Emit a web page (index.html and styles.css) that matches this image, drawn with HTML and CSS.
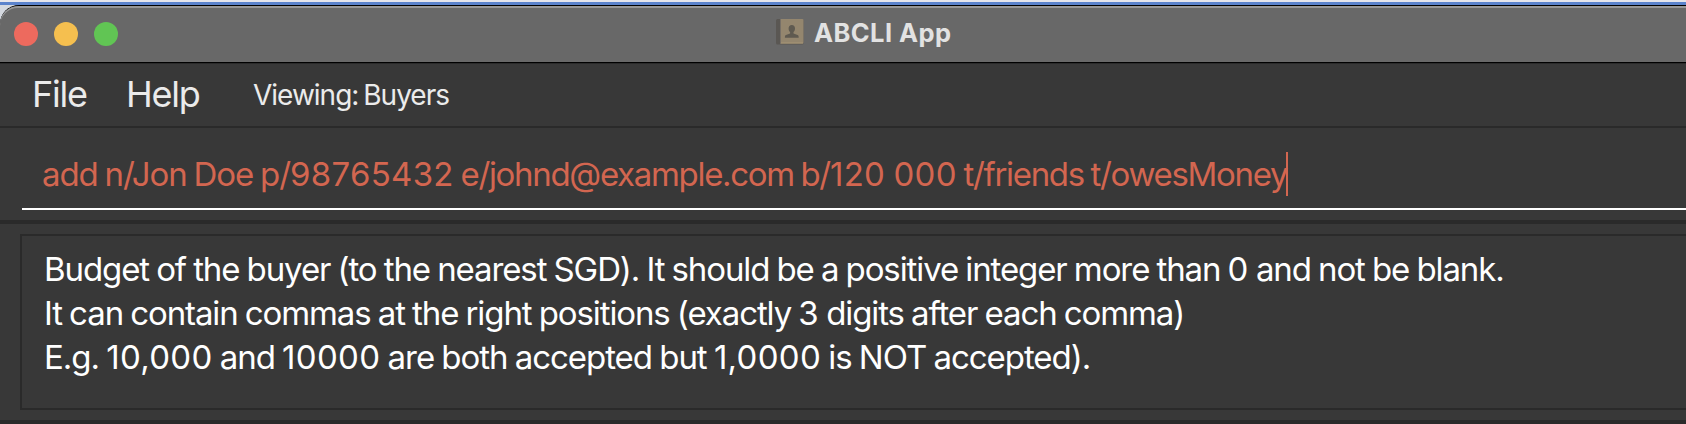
FILE: index.html
```
<!DOCTYPE html>
<html lang="en">
<head>
<meta charset="utf-8">
<title>ABCLI App</title>
<link rel="stylesheet" href="styles.css">
</head>
<body>
<div class="backdrop">
<main class="window">
  <header class="titlebar">
    <div class="lights"><i class="light close"></i><i class="light minimise"></i><i class="light maximise"></i></div>
    <div class="title">
      <svg class="book" width="28" height="28" viewBox="0 0 28 28">
        <rect x="0" y="1" width="27.5" height="25.5" rx="1.5" fill="#5a5753"/>
        <rect x="4" y="1" width="23.500" height="24.500" rx="1" fill="#94866e"/>
        <path d="M4 25H27" stroke="#a99777" stroke-width="1"/>
        <path d="M4.500 1V26" stroke="#777067" stroke-width="1"/>
        <path d="M15.8 7c-2 0-3.200 1.300-3.200 3.400 0 1.700.7 3 1.500 3.700v1.500l-4.100 1.500c-.8.4-1.100 1-1.100 2.700h13.800c0-1.700-.3-2.300-1.100-2.700l-4.100-1.500v-1.500c.8-.7 1.500-2 1.500-3.700C19 8.300 17.800 7 15.800 7z" fill="#5f5a50"/>
      </svg>
      <span class="name">ABCLI App</span>
    </div>
  </header>
  <nav class="menubar">
    <span class="menu file">File</span>
    <span class="menu help">Help</span>
    <span class="status">Viewing: Buyers</span>
  </nav>
  <section class="command">
    <div class="field"><span class="entry"><span class="lead">add n/Jon Doe p/</span><span class="num">98765432</span> e/johnd@example.com b/<span class="num">120 000</span> t/friends t/owesMoney</span><i class="caret"></i></div>
  </section>
  <section class="result">
    <div class="message">
      <p class="line first">Budget of the buyer (to the nearest SGD). It should be a positive integer more than <span class="num">0</span> and not be blank.</p>
      <p class="line second">It can contain commas at the right positions (exactly <span class="num">3</span> digits after each comma)</p>
      <p class="line third">E.g. <span class="num">10,000</span> and <span class="num">10000</span> are both accepted but <span class="num">1,0000</span> is NOT accepted).</p>
    </div>
  </section>
</main>
</div>
</body>
</html>
```
FILE: styles.css
```
* { box-sizing: border-box; }
body { margin: 0; overflow: hidden; font-family: Inter, "Liberation Sans", sans-serif; white-space: nowrap; }
p { margin: 0; }
.backdrop { height: 424px; padding-top: 5px; background: linear-gradient(#e6e6ec 0 2px, #5b83cc 2px 5px, #d5d9e0 5px); overflow: hidden; }
.window { width: 1710px; height: 419px; border-top: 1px solid #000; border-radius: 19px 0 0 0; background: #383838; overflow: hidden; }
.titlebar { height: 58px; width: 1686px; display: grid; grid-template-columns: 776px 1fr; align-items: start; background: #686868; border-bottom: 1px solid #2a2a2a; border-radius: 18px 0 0 0; box-shadow: inset 0 2px #969696, inset 0 -1px #000; }
.lights { display: flex; gap: 16px; padding: 16px 0 0 14px; }
.light { width: 24px; height: 24px; border-radius: 50%; }
.close { background: #ed6a5e; }
.minimise { background: #f5bf4f; }
.maximise { background: #61c554; }
.title { display: flex; padding-top: 12px; }
.name { margin-left: 10px; line-height: 30px; font-size: 25.5px; font-weight: 700; letter-spacing: 0.45px; color: #e2e2e2; }
.menubar { height: 64px; display: flex; align-items: center; padding-left: 32px; border-bottom: 2px solid #2a2a2a; color: #ebebeb; }
.menu { padding-bottom: 2px; font-size: 36px; line-height: 44px; letter-spacing: -1.2px; }
.file { width: 94px; }
.help { width: 127px; }
.status { font-size: 28px; line-height: 34px; letter-spacing: -1px; word-spacing: -2px; }
.command { height: 96px; padding: 21px 0 0 22px; border-bottom: 4px solid #2a2a2a; }
.field { height: 61px; display: flex; align-items: flex-start; padding: 3px 0 0 20px; border-bottom: 2px solid #fff; }
.entry { font-size: 33px; line-height: 44px; letter-spacing: -1.32px; word-spacing: -1.3px; color: #d36650; }
.lead { letter-spacing: -1.08px; }
.caret { width: 2px; height: 44px; margin-left: -1px; background: #d36650; }
.result { height: 200px; padding: 10px 0 0 20px; border-bottom: 4px solid #2a2a2a; }
.message { height: 176px; padding: 11px 0 0 22px; border: 2px solid #2a2a2a; font-size: 33px; line-height: 44px; color: #fff; }
.line { letter-spacing: -1.1px; word-spacing: -1px; }
.third { letter-spacing: -1.04px; }
.num { letter-spacing: 0.3px; }
```
